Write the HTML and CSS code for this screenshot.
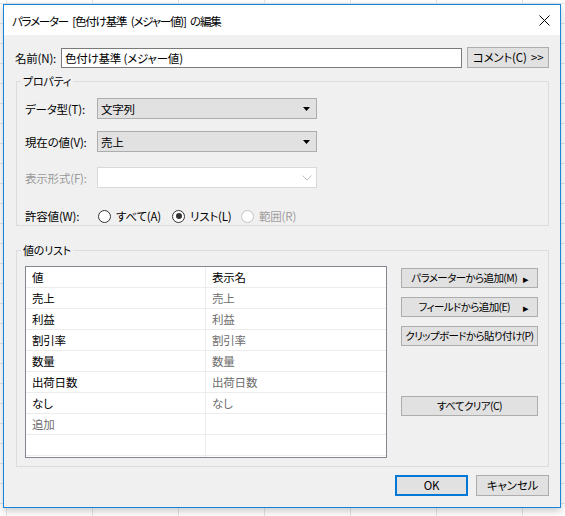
FILE: index.html
```html
<!DOCTYPE html>
<html>
<head>
    <title>パラメーターの編集</title>
    <link rel="stylesheet" href="styles.css">
</head>
<body>
    <div class="dialog">
        <div class="titlebar">
            <span class="title">パラメーター [色付け基準 (メジャー値)] の編集</span>
            <svg class="close" width="11" height="11" viewBox="0 0 11 11">
                <path d="M0.5 0.5 L10.5 10.5 M10.5 0.5 L0.5 10.5" stroke="#000" stroke-width="1" fill="none"/>
            </svg>
        </div>

        <div class="content">
            <div class="name-row">
                <label class="name-label" for="paramName">名前(N):</label>
                <input type="text" id="paramName" class="name-input" value="色付け基準 (メジャー値)">
                <button class="btn comment-btn">コメント(C) &gt;&gt;</button>
            </div>

            <fieldset class="group props">
                <legend>プロパティ</legend>
                <div class="field-row row-type">
                    <span class="field-label">データ型(T):</span>
                    <div class="select">
                        <span class="select-text">文字列</span>
                        <svg class="select-arrow" width="7" height="4" viewBox="0 0 7 4"><polygon points="0,0 7,0 3.5,4" fill="#000"/></svg>
                    </div>
                </div>
                <div class="field-row row-current">
                    <span class="field-label">現在の値(V):</span>
                    <div class="select">
                        <span class="select-text">売上</span>
                        <svg class="select-arrow" width="7" height="4" viewBox="0 0 7 4"><polygon points="0,0 7,0 3.5,4" fill="#000"/></svg>
                    </div>
                </div>
                <div class="field-row row-format">
                    <span class="field-label disabled">表示形式(F):</span>
                    <div class="select combo-disabled">
                        <span class="select-text"></span>
                        <svg class="combo-chevron" width="10" height="6" viewBox="0 0 10 6"><polyline points="0.5,0.5 5,5 9.5,0.5" stroke="#bfbfbf" stroke-width="1" fill="none"/></svg>
                    </div>
                </div>
                <div class="field-row row-allowed">
                    <span class="field-label">許容値(W):</span>
                    <div class="radios">
                        <span class="radio"><span class="radio-dot"></span>すべて(A)</span>
                        <span class="radio checked"><span class="radio-dot"></span>リスト(L)</span>
                        <span class="radio disabled"><span class="radio-dot"></span>範囲(R)</span>
                    </div>
                </div>
            </fieldset>

            <fieldset class="group values">
                <legend>値のリスト</legend>
                <div class="values-body">
                    <div class="listbox">
                        <div class="list-row head"><span class="cell">値</span><span class="cell">表示名</span></div>
                        <div class="list-row"><span class="cell">売上</span><span class="cell alias">売上</span></div>
                        <div class="list-row"><span class="cell">利益</span><span class="cell alias">利益</span></div>
                        <div class="list-row"><span class="cell">割引率</span><span class="cell alias">割引率</span></div>
                        <div class="list-row"><span class="cell">数量</span><span class="cell alias">数量</span></div>
                        <div class="list-row"><span class="cell">出荷日数</span><span class="cell alias">出荷日数</span></div>
                        <div class="list-row"><span class="cell">なし</span><span class="cell alias">なし</span></div>
                        <div class="list-row"><span class="cell alias">追加</span><span class="cell"></span></div>
                        <div class="list-row"><span class="cell"></span><span class="cell"></span></div>
                        <div class="list-row"><span class="cell"></span><span class="cell"></span></div>
                    </div>
                    <div class="side-buttons">
                        <button class="btn side-btn btn-param"><span class="side-text">パラメーターから追加(M)</span><span class="side-arrow">&#9656;</span></button>
                        <button class="btn side-btn btn-field"><span class="side-text">フィールドから追加(E)</span><span class="side-arrow">&#9656;</span></button>
                        <button class="btn side-btn btn-paste">クリップボードから貼り付け(P)</button>
                        <button class="btn side-btn btn-clear">すべてクリア(C)</button>
                    </div>
                </div>
            </fieldset>

            <div class="footer">
                <button class="btn footer-btn default">OK</button>
                <button class="btn footer-btn">キャンセル</button>
            </div>
        </div>
    </div>
</body>
</html>
```

FILE: styles.css
```css
/* Basic styling */
* {
    box-sizing: border-box;
}
body {
    margin: 0;
    height: 516px;
    overflow: hidden;
    font-family: "Noto Sans CJK JP", "Noto Sans", sans-serif;
    font-size: 11.5px;
    font-feature-settings: "palt";
    letter-spacing: -0.2px;
    color: #000;
    background-color: #fff;
    background-image:
        linear-gradient(to right, #e4e4e4 1px, transparent 1px),
        linear-gradient(to bottom, #e4e4e4 1px, transparent 1px);
    background-size: 86px 100%, 100% 20px;
    background-position: 6px 0, 0 3px;
    padding: 4px 0 0 3px;
}
button, input {
    font: inherit;
    color: inherit;
    letter-spacing: inherit;
}

/* Window frame */
.dialog {
    width: 558px;
    height: 504px;
    border: 1px solid #1883d7;
    background-color: #f0f0f0;
    display: flex;
    flex-direction: column;
    box-shadow: 0 3px 8px rgba(0, 0, 0, 0.22);
}
.titlebar {
    height: 30px;
    flex-shrink: 0;
    background-color: #fff;
    display: flex;
    align-items: center;
    justify-content: space-between;
    padding: 1px 10px 0 8px;
}
.title {
    font-size: 11.5px;
    letter-spacing: -1.2px;
    word-spacing: 3px;
}
.close {
    display: block;
}
.content {
    flex: 1;
    padding: 12px 11px 0 12px;
}

/* Shared button look */
.btn {
    background-color: #e1e1e1;
    border: 1px solid #adadad;
    padding: 0;
    line-height: 1;
    white-space: nowrap;
}

/* Name row */
.name-row {
    display: flex;
    align-items: center;
    height: 21px;
    margin-left: -1px;
}
.name-label {
    width: 46px;
}
.name-input {
    width: 402px;
    height: 20px;
    border: 1px solid #7a7a7a;
    background-color: #fff;
    padding: 0 3px;
    outline: none;
}
.comment-btn {
    width: 82px;
    height: 21px;
    margin-left: 5px;
    word-spacing: 2px;
}

/* Group boxes */
.group {
    margin: 6px 0 0;
    padding: 0 0 0 4px;
    border: 1px solid #dcdcdc;
    min-width: 0;
}
.group legend {
    padding: 0 2px;
    height: 14px;
    line-height: 14px;
    font-size: 11px;
}
.props {
    padding-bottom: 1px;
}
.field-row {
    display: flex;
    align-items: center;
    height: 21px;
    padding-left: 4px;
}
.row-type {
    margin-top: 10px;
}
.row-current {
    margin-top: 12px;
}
.row-format {
    margin-top: 15px;
}
.row-allowed {
    margin-top: 20px;
    height: 16px;
}
.field-label {
    width: 72px;
}
.field-label.disabled {
    color: #9a9a9a;
}

/* Drop-down lists */
.select {
    width: 220px;
    height: 21px;
    background-color: #e1e1e1;
    border: 1px solid #adadad;
    display: flex;
    align-items: center;
    justify-content: space-between;
    padding: 0 6px 0 3px;
}
.select-arrow {
    display: block;
    margin-top: 1px;
}
.combo-disabled {
    background-color: #fff;
    border-color: #d9d9d9;
    padding-right: 4px;
}
.combo-chevron {
    display: block;
}

/* Radio buttons */
.radios {
    display: flex;
    align-items: center;
    margin-left: 1px;
}
.radio {
    display: flex;
    align-items: center;
}
.radio:nth-child(1) {
    width: 74px;
}
.radio:nth-child(2) {
    width: 69px;
}
.radio-dot {
    width: 13px;
    height: 13px;
    border: 1px solid #333;
    border-radius: 50%;
    background-color: #fff;
    margin-right: 5px;
    display: flex;
    align-items: center;
    justify-content: center;
}
.radio.checked .radio-dot::after {
    content: "";
    width: 6px;
    height: 6px;
    border-radius: 50%;
    background-color: #333;
}
.radio.disabled {
    color: #a0a0a0;
}
.radio.disabled .radio-dot {
    border-color: #c4c4c4;
}

/* Value list */
.values {
    margin-top: 17px;
    padding-bottom: 8px;
}
.values-body {
    display: flex;
    align-items: flex-start;
    margin-top: 9px;
    padding-left: 4px;
}
.listbox {
    width: 362px;
    height: 192px;
    border: 1px solid #828790;
    background-color: #fff;
    overflow: hidden;
}
.list-row {
    display: flex;
    height: 21px;
    border-bottom: 1px solid #ececec;
}
.cell {
    display: flex;
    align-items: center;
    padding-left: 6px;
}
.cell:first-child {
    width: 180px;
    border-right: 1px solid #ececec;
}
.cell:last-child {
    flex: 1;
}
.cell.alias {
    color: #6d6d6d;
}
.side-buttons {
    display: flex;
    flex-direction: column;
    margin-left: 14px;
    padding-top: 2px;
}
.side-btn {
    width: 137px;
    height: 20px;
    display: flex;
    align-items: center;
    justify-content: center;
    font-size: 10.5px;
    letter-spacing: -0.6px;
}
.btn-param, .btn-field {
    padding: 0 9px 0 4px;
}
.side-text {
    flex: 1;
    text-align: center;
}
.side-arrow {
    font-size: 11px;
}
.btn-field, .btn-paste {
    margin-top: 9px;
}
.btn-clear {
    margin-top: 50px;
}

/* OK / Cancel */
.footer {
    display: flex;
    justify-content: flex-end;
    gap: 8px;
    margin-top: 8px;
}
.footer-btn {
    width: 73px;
    height: 21px;
}
.footer-btn.default {
    border: 2px solid #0078d7;
}
```
